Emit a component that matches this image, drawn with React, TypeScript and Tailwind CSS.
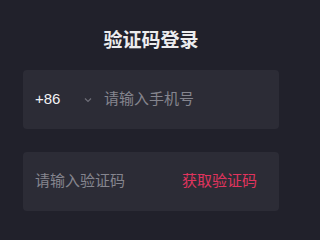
import React from "react";

export default function App() {
  return (
    <div
      className="w-[320px] h-[240px] bg-[#21212b] overflow-hidden"
      style={{ fontFamily: '"Liberation Sans", "Noto Sans CJK SC", sans-serif' }}
    >
      <div className="ml-[23px] w-[256px] flex flex-col">
        <div className="pt-[28px] h-[54px] text-center text-[19px] leading-[26px] font-bold text-[#ececee]">
          验证码登录
        </div>
        <div className="mt-[16px] h-[59px] rounded-[4px] bg-[#2c2c36] flex items-center pl-[12px]">
          <span className="text-[15px] text-[#f2f2f4] w-[44px]">+86</span>
          <svg width="8" height="6" viewBox="0 0 8 6" className="ml-[5px]">
            <path d="M1 1.5 L4 4.5 L7 1.5" stroke="#6e6e78" strokeWidth="1.2" fill="none" />
          </svg>
          <span className="ml-[12px] text-[15px] text-[#85858e]">请输入手机号</span>
        </div>
        <div className="mt-[23px] h-[59px] rounded-[4px] bg-[#2c2c36] flex items-center justify-between pl-[12px] pr-[22px]">
          <span className="text-[15px] text-[#85858e]">请输入验证码</span>
          <span className="text-[15px] text-[#e0345e]">获取验证码</span>
        </div>
      </div>
    </div>
  );
}
